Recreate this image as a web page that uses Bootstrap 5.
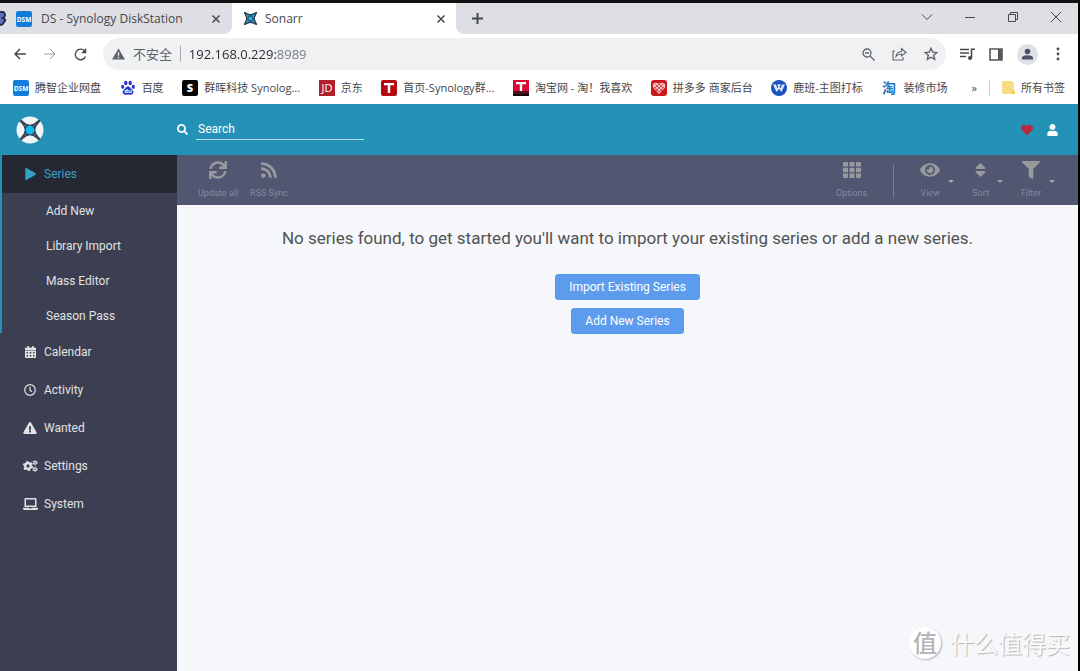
<!DOCTYPE html>
<html lang="zh-CN">
<head>
<meta charset="utf-8">
<meta name="viewport" content="width=device-width, initial-scale=1">
<title>Sonarr</title>
<link href="https://cdn.jsdelivr.net/npm/bootstrap@5.3.0/dist/css/bootstrap.min.css" rel="stylesheet">
<style>
:root{--teal:#2492b6;--side:#3b3f51;--tool:#515671}
body{font-family:Roboto,"Noto Sans CJK SC",sans-serif;font-size:12px;line-height:18px;color:#515253;background:#f5f7fa;border-top:3px solid #111;border-right:2px solid #000}
a{text-decoration:none;color:inherit}
button{border:0;padding:0;background:none;color:inherit;line-height:inherit;font-size:inherit}
svg{display:block;flex:none}
.fa-ic{fill:currentColor}
.line-ic{fill:none;stroke:currentColor}
.browser-ui{font-family:"Open Sans","Noto Sans CJK SC",sans-serif;color:#45484c;background:#fff}
.tab-strip{height:31px;background:#dddfe4}
.tab-idle{width:232px;border-bottom-right-radius:8px;overflow:hidden}
.tab-idle,.strip-rest{background:#dddfe4}
.strip-rest{border-bottom-left-radius:8px}
.tab-open{width:224px;background:#fff;border-radius:8px 8px 0 0;padding:0 11px 0 12px}
.tab-holder{background:#fff}
.win-keys{gap:31px;padding-right:16px}
.address-row{height:40px;padding:0 14px 0 14px}
.address-pill{height:32px;border-radius:16px;background:#eff1f3;padding:0 8px 0 9px;font-size:13px;color:#5f6368}
/* host name dark, port number lighter */
.address-pill input{border:0;outline:0;width:100%;min-width:0;padding:0;color:transparent;background:linear-gradient(90deg,#27292c 87px,#75797e 87px);-webkit-background-clip:text;background-clip:text}
.divider{width:1px;height:16px;background:#a4a7ab}
.bookmark-row{height:30px;font-size:11px;padding:0 13px 2px;white-space:nowrap}
.bookmark-row a{gap:6px}
.app-head{height:51px;background:var(--teal)}
.brand-cell{width:177px;padding-left:16px}
.find-box{width:168px;border:0;border-bottom:1px solid #b5dce8;border-radius:0;background:none;color:#fff;outline:0;padding:0 2px;height:20px}
.find-box::placeholder{color:#fff;opacity:1}
.side-menu{width:177px;background:var(--side);color:#e1e2e3;flex:none}
.side-menu .top-link{height:38px;padding-left:22px;gap:6px}
.side-menu .pic{width:16px;display:flex;justify-content:center}
.open-group{border-left:2px solid var(--teal)}
.open-group .top-link{background:#252833;color:#35a0c2;padding-left:20px}
.sub-link{height:35px;padding-left:44px}
.tool-row{height:50px;background:var(--tool);color:#989aa4;padding:5px 23px 0 21px;font-size:9px;line-height:12px}
.tool-row button{color:#8689a0}
.tool-row .fa-ic{color:#989a9e}
.tool-row .glyph{height:20px;display:flex;align-items:center;justify-content:center;margin-bottom:7px}
.tool-line{width:1px;height:34px;background:#777b8d;margin:4px 26px 0}
.caret{border:3px solid transparent;border-top-color:#a5a7ae;border-bottom:0;margin-top:20px}
.message{font-size:17px;line-height:24px;padding-top:21px;margin-bottom:24px}
.btn-sonarr{--bs-btn-color:#fff;--bs-btn-bg:#5d9cec;--bs-btn-border-color:#5899eb;--bs-btn-padding-x:13px;--bs-btn-padding-y:3px;--bs-btn-font-size:12px;--bs-btn-line-height:18px;--bs-btn-border-radius:3px;--bs-btn-font-weight:400}
.stamp{right:10px;bottom:11px;font-family:"Noto Sans CJK SC",sans-serif;font-size:24px;line-height:34px;color:#fbfbfc;text-shadow:1px 1px 1px #b4b4b6;gap:9px}
.stamp-disc{width:32px;height:32px;border-radius:50%;background:#fff;box-shadow:1px 1px 2px #b4b4b6;color:#b5b5b7;text-shadow:none;line-height:30px;text-align:center;font-weight:500}
</style>
</head>
<body class="d-flex flex-column min-vh-100">

<header class="browser-ui">
  <div class="tab-strip d-flex">
    <div class="tab-holder d-flex flex-grow-1">
      <div class="tab-idle d-flex align-items-center pe-2">
        <svg width="7" height="16" viewBox="0 0 7 16"><path d="M0 1Q5 0 5 4Q5 6 3 7Q7 9 4 11Q3 14 0 14" fill="#6570bd" stroke="#262b50" stroke-width="2"/></svg>
        <svg class="mx-2" width="18" height="16" viewBox="0 0 16 16"><rect width="16" height="16" rx="2" fill="#137ddb"/><text x="8" y="10.500" font-size="6.500" font-weight="700" text-anchor="middle" fill="#fff">DSM</text></svg>
        <span class="flex-grow-1 text-nowrap">DS - Synology DiskStation</span>
        <button aria-label="关闭"><svg class="line-ic me-1" width="8" height="8" viewBox="0 0 8 8" stroke-width="1.500"><path d="M0.500 0.500l7 7M7.500 0.500l-7 7"/></svg></button>
      </div>
      <div class="tab-open d-flex align-items-center">
        <svg class="me-2" width="13" height="13" viewBox="0 0 26 26"><path d="M1 1L8 4Q13 7 18 4L25 1L22 8Q19 13 22 18L25 25L18 22Q13 19 8 22L1 25L4 18Q7 13 4 8Z" fill="#2b9cc9" stroke="#26384c" stroke-width="2.500"/><circle cx="13" cy="13" r="5" fill="#25b9ec" stroke="#26384c" stroke-width="2"/></svg>
        <span class="flex-grow-1">Sonarr</span>
        <button aria-label="关闭"><svg class="line-ic" width="8" height="8" viewBox="0 0 8 8" stroke-width="1.500"><path d="M0.500 0.500l7 7M7.500 0.500l-7 7"/></svg></button>
      </div>
      <div class="strip-rest d-flex flex-grow-1 align-items-center ps-3">
        <button aria-label="新标签页" class="me-auto"><svg class="line-ic" width="11" height="11" viewBox="0 0 11 11" stroke-width="2"><path d="M5.500 0v11M0 5.500h11"/></svg></button>
        <div class="win-keys d-flex align-items-center pb-1">
          <button aria-label="搜索标签页"><svg class="line-ic" width="12" height="10" viewBox="0 0 12 10"><path d="M1 2.500l5 5 5-5"/></svg></button>
          <button aria-label="最小化"><svg class="line-ic" width="12" height="10" viewBox="0 0 12 10"><path d="M1 5.500h10"/></svg></button>
          <button aria-label="还原"><svg class="line-ic" width="12" height="12" viewBox="0 0 12 12"><path d="M1.500 3.500h7v7h-7zM3.500 3.500v-2h7v7h-2"/></svg></button>
          <button aria-label="关闭窗口"><svg class="line-ic" width="12" height="12" viewBox="0 0 12 12"><path d="M1 1l10 10M11 1L1 11"/></svg></button>
        </div>
      </div>
    </div>
  </div>

  <div class="address-row d-flex align-items-center">
    <div class="d-flex align-items-center me-3" style="gap:18px">
      <button aria-label="后退"><svg class="line-ic" width="12" height="12" viewBox="0 0 12 12" stroke-width="1.500"><path d="M12 6H1M6 1L1 6l5 5"/></svg></button>
      <button aria-label="前进" class="text-black-50"><svg class="line-ic opacity-75" width="12" height="12" viewBox="0 0 12 12"><path d="M0 6h11M6 1l5 5-5 5"/></svg></button>
      <button aria-label="重新加载"><svg class="line-ic" width="13" height="13" viewBox="0 0 13 13" stroke-width="1.400"><path d="M11.500 8.500A5.300 5.300 0 1 1 10.500 2.800L12 4.500"/><path d="M12.200 0v5.200H7z" fill="currentColor" stroke="none"/></svg></button>
    </div>
    <div class="address-pill d-flex align-items-center flex-grow-1">
      <svg class="me-2" width="13" height="12" viewBox="0 0 13 12"><path d="M6.500 0.500L13 11.500H0z" fill="#5f6368"/><path d="M6.500 4.200v3.600M6.500 8.800v1.400" stroke="#eff1f3" stroke-width="1.300"/></svg>
      <label for="addr" class="text-nowrap">不安全</label>
      <span class="divider ms-2 me-2"></span>
      <input class="flex-grow-1" id="addr" type="text" value="192.168.0.229:8989">
      <div class="d-flex align-items-center" style="gap:17px">
        <button aria-label="缩放"><svg class="line-ic" width="13" height="13" viewBox="0 0 13 13" stroke-width="1.300"><circle cx="5" cy="5" r="4"/><path d="M8 8l4.500 4.500M3 5h4"/></svg></button>
        <button aria-label="分享"><svg class="line-ic" width="15" height="14" viewBox="0 0 15 14" stroke-width="1.100"><path d="M3 4H1v9h10v-3M4 9.500Q4.500 5 9.500 4.500V1.500L14 5.500 9.500 9V7Q6 7 4 9.500z"/></svg></button>
        <button aria-label="收藏"><svg class="line-ic" width="14" height="14" viewBox="0 0 14 14" stroke-width="1.400"><path d="M7 1.300l1.700 3.800 4.200.400-3.200 2.800 1 4.100L7 10.200l-3.700 2.200 1-4.100L1.100 5.500l4.200-.400z"/></svg></button>
      </div>
    </div>
    <div class="d-flex align-items-center" style="gap:14px;margin-left:14px">
      <button aria-label="媒体控制"><svg class="line-ic" width="15" height="13" viewBox="0 0 15 13" stroke-width="1.600"><path d="M0 1.500h9M0 5h9M0 8.500h6M11.500 10V1.300H15"/><circle cx="10" cy="10" r="2" fill="currentColor" stroke="none"/></svg></button>
      <button aria-label="侧边栏"><svg width="14" height="13" viewBox="0 0 14 13"><path d="M1 1h12v11H1z" fill="none" stroke="#54575b" stroke-width="1.600"/><path d="M9 1h4v11H9z" fill="#54575b"/></svg></button>
      <button aria-label="用户"><svg width="21" height="21" viewBox="0 0 21 21"><circle cx="10.500" cy="10.500" r="10.500" fill="#dfe1e6"/><circle cx="10.500" cy="7.500" r="2.800" fill="#4b5365"/><path d="M5 15.500v-1.500q0-2.800 5.500-2.800t5.500 2.800v1.500z" fill="#4b5365"/></svg></button>
      <button aria-label="菜单" class="px-1"><svg class="fa-ic" width="4" height="14" viewBox="0 0 4 14"><circle cx="2" cy="2" r="1.400"/><circle cx="2" cy="7" r="1.400"/><circle cx="2" cy="12" r="1.400"/></svg></button>
    </div>
  </div>

  <nav class="bookmark-row d-flex align-items-center">
    <div class="d-flex flex-grow-1 justify-content-between">
      <a href="#" class="d-flex align-items-center"><svg width="16" height="16" viewBox="0 0 16 16"><rect width="16" height="16" rx="2" fill="#137ddb"/><text x="8" y="10.500" font-size="6.500" font-weight="700" text-anchor="middle" fill="#fff">DSM</text></svg>腾智企业网盘</a>
      <a href="#" class="d-flex align-items-center"><svg width="16" height="16" viewBox="0 0 16 16" fill="#2a35c5"><ellipse cx="5.800" cy="3" rx="1.700" ry="2.300"/><ellipse cx="10.200" cy="3" rx="1.700" ry="2.300"/><ellipse cx="2.700" cy="6.800" rx="1.600" ry="2.100"/><ellipse cx="13.300" cy="6.800" rx="1.600" ry="2.100"/><path d="M8 6.300Q10 6.500 11 8.700Q14.500 11 13 13.500Q12 15.500 8 14.500Q4 15.500 3 13.500Q1.500 11 5 8.700Q6 6.500 8 6.300z"/><text x="8" y="13.200" font-size="6" font-weight="700" fill="#fff" text-anchor="middle">du</text></svg>百度</a>
      <a href="#" class="d-flex align-items-center"><svg width="16" height="16" viewBox="0 0 16 16"><rect width="16" height="16" rx="2" fill="#050505"/><text x="8" y="12" font-size="11" font-weight="800" text-anchor="middle" fill="#fff">S</text></svg>群晖科技 Synolog...</a>
      <a href="#" class="d-flex align-items-center"><svg width="16" height="16" viewBox="0 0 16 16"><rect width="16" height="16" fill="#b3202c"/><text x="8" y="12" font-size="11" text-anchor="middle" fill="#fff">JD</text></svg>京东</a>
      <a href="#" class="d-flex align-items-center"><svg width="16" height="16" viewBox="0 0 16 16"><rect width="16" height="16" rx="2" fill="#b50b12"/><path d="M3 3h10v2.300H9.200V13H6.800V5.300H3z" fill="#fff"/></svg>首页-Synology群...</a>
      <a href="#" class="d-flex align-items-center"><svg width="16" height="16" viewBox="0 0 16 16"><rect width="16" height="16" fill="#d90b35"/><path d="M0 11h16v5H0z" fill="#52101b"/><path d="M0 14h16v2H0z" fill="#16090c"/><path d="M3 2h10v2.200H9.200V11H6.800V4.200H3z" fill="#fff"/></svg>淘宝网 - 淘！我喜欢</a>
      <a href="#" class="d-flex align-items-center"><svg width="16" height="16" viewBox="0 0 16 16"><rect width="16" height="16" rx="3" fill="#cc161d"/><path d="M8 14L2 7.500Q1 3 4.500 2.700Q7 2.700 8 4Q9 2.700 11.500 2.700Q15 3 14 7.500z" fill="#f3c7c7"/><path d="M4 4l7 7M12 4l-7 7M3 7l5 5M13 7l-5 5M8 4l4 4M8 4L4 8" stroke="#cc161d" stroke-width=".7"/></svg>拼多多 商家后台</a>
      <a href="#" class="d-flex align-items-center"><svg width="16" height="16" viewBox="0 0 16 16"><circle cx="8" cy="8" r="8" fill="#1b50bf"/><path d="M2 4.500h3l1.500 4L8 5.500l1.500 3 1.500-4h3L10.500 12 8 9 5.500 12z" fill="#dce8fb"/><path d="M6 4.500h4L8 7z" fill="#fff"/></svg>鹿班-主图打标</a>
      <a href="#" class="d-flex align-items-center"><svg class="overflow-visible" width="16" height="16" viewBox="0 0 16 16"><text x="8" y="13" font-size="14" font-weight="700" text-anchor="middle" fill="#2877c3">淘</text></svg>装修市场</a>
    </div>
    <button class="ms-4 me-2 pe-1" aria-label="更多书签">»</button>
    <span class="divider opacity-50 me-2"></span>
    <a href="#" class="d-flex align-items-center ps-1"><svg width="13" height="14" viewBox="0 0 13 14"><path d="M1 0h9l2 2v7l1 1v3H1q-1 0-1-1V1q0-1 1-1z" fill="#f8dc83"/><path d="M9 13V10h4v3z" fill="#f2cd5b"/></svg>所有书签</a>
  </nav>
</header>

<div class="app-head d-flex align-items-center text-white">
  <a href="#" class="brand-cell" aria-label="Sonarr"><svg width="28" height="28" viewBox="0 0 28 28"><circle cx="14" cy="14" r="13.500" fill="#eef4f7"/><path d="M5 4L10 8Q14 10.500 18 8L23 4L24 5L20 10Q17.500 14 20 18L24 23L23 24L18 20Q14 17.500 10 20L5 24L4 23L8 18Q10.500 14 8 10L4 5Z" fill="#3a4354" stroke="#3a4354"/><path d="M8.500 8.500l2 2M19.500 8.500l-2 2M8.500 19.500l2-2M19.500 19.500l-2-2" stroke="#2b87a6"/><circle cx="14" cy="14" r="4.300" fill="#0cbcf5"/></svg></a>
  <label for="find" class="me-2"><svg class="fa-ic" width="11" height="11" viewBox="0 0 512 512"><path d="M505 442.700L405.300 343c-4.500-4.500-10.600-7-17-7H372c27.600-35.300 44-79.700 44-128C416 93.100 322.900 0 208 0S0 93.100 0 208s93.100 208 208 208c48.300 0 92.700-16.400 128-44v16.300c0 6.400 2.500 12.500 7 17l99.700 99.700c9.400 9.400 24.600 9.400 33.900 0l28.300-28.300c9.400-9.400 9.400-24.600.1-34zM208 336c-70.700 0-128-57.200-128-128 0-70.700 57.200-128 128-128 70.700 0 128 57.200 128 128 0 70.700-57.200 128-128 128z"/></svg></label>
  <input id="find" class="find-box" type="text" placeholder="Search">
  <div class="d-flex align-items-center ms-auto me-3 pe-1" style="gap:14px">
    <a href="#" aria-label="Donate"><svg width="12" height="12" viewBox="0 0 512 512" fill="#b8293d"><path d="M462.300 62.600C407.500 15.900 326 24.300 275.700 76.200L256 96.500l-19.700-20.300C186.100 24.300 104.500 15.900 49.700 62.600c-62.800 53.600-66.100 149.800-9.900 207.900l193.500 199.800c12.500 12.900 32.800 12.900 45.300 0l193.500-199.800c56.300-58.100 53-154.300-9.800-207.900z"/></svg></a>
    <button aria-label="Account"><svg class="fa-ic" width="11" height="12" viewBox="0 0 448 512"><path d="M224 256c70.700 0 128-57.300 128-128S294.700 0 224 0 96 57.300 96 128s57.300 128 128 128zm89.600 32h-16.700c-22.200 10.200-46.900 16-72.900 16s-50.600-5.800-72.900-16h-16.700C60.200 288 0 348.200 0 422.400V464c0 26.500 21.500 48 48 48h352c26.500 0 48-21.500 48-48v-41.600c0-74.200-60.200-134.400-134.400-134.400z"/></svg></button>
  </div>
</div>

<div class="d-flex flex-grow-1">
  <nav class="side-menu">
    <div class="open-group">
      <a href="#" class="top-link d-flex align-items-center"><span class="pic"><svg class="fa-ic" width="11" height="12" viewBox="0 0 448 512"><path d="M424.400 214.700L72.400 6.600C43.800-10.300 0 6.100 0 47.900V464c0 37.500 40.700 60.100 72.400 41.300l352-208c31.400-18.500 31.500-64.100 0-82.600z"/></svg></span>Series</a>
      <a href="#" class="sub-link d-flex align-items-center">Add New</a>
      <a href="#" class="sub-link d-flex align-items-center">Library Import</a>
      <a href="#" class="sub-link d-flex align-items-center">Mass Editor</a>
      <a href="#" class="sub-link d-flex align-items-center">Season Pass</a>
    </div>
    <a href="#" class="top-link d-flex align-items-center"><span class="pic"><svg class="fa-ic" width="11" height="12" viewBox="0 0 11 12"><path fill-rule="evenodd" d="M2.500 0H4v1.500h3V0h1.500v1.500H10q1 0 1 1V4H0V2.500q0-1 1-1h1.500zM0 4.600h11V11q0 1-1 1H1q-1 0-1-1zM1.500 6v1.400H3V6zm3.200 0v1.400h1.600V6zM8 6v1.400h1.500V6zM1.500 9v1.400H3V9zm3.200 0v1.400h1.600V9zM8 9v1.400h1.500V9z"/></svg></span>Calendar</a>
    <a href="#" class="top-link d-flex align-items-center"><span class="pic"><svg class="line-ic" width="12" height="12" viewBox="0 0 12 12" stroke-width="1.200"><circle cx="6" cy="6" r="5.300"/><path d="M6 2.800V6.300l2 1.500"/></svg></span>Activity</a>
    <a href="#" class="top-link d-flex align-items-center"><span class="pic"><svg class="fa-ic" width="14" height="12" viewBox="0 0 576 512"><path d="M569.517 440.013C587.975 472.007 564.806 512 527.940 512H48.054c-36.937 0-59.999-40.055-41.577-71.987L246.423 23.985c18.467-32.009 64.720-31.951 83.154 0l239.940 416.028zM288 354c-25.405 0-46 20.595-46 46s20.595 46 46 46 46-20.595 46-46-20.595-46-46-46zm-43.673-165.346l7.418 136c.347 6.364 5.609 11.346 11.982 11.346h48.546c6.373 0 11.635-4.982 11.982-11.346l7.418-136c.375-6.874-5.098-12.654-11.982-12.654h-63.383c-6.884 0-12.356 5.780-11.981 12.654z"/></svg></span>Wanted</a>
    <a href="#" class="top-link d-flex align-items-center"><span class="pic"><svg class="line-ic" width="15" height="12" viewBox="0 0 15 12"><circle cx="5" cy="6" r="2.800" stroke-width="2.300"/><circle cx="5" cy="6" r="4.300" stroke-width="1.600" stroke-dasharray="2.252 2.252"/><circle cx="12" cy="2.700" r="1.400" stroke-width="1.200"/><circle cx="12" cy="2.700" r="2.300" stroke-width=".8" stroke-dasharray="1.200 1.200"/><circle cx="12" cy="9.300" r="1.400" stroke-width="1.200"/><circle cx="12" cy="9.300" r="2.300" stroke-width=".8" stroke-dasharray="1.200 1.200"/></svg></span>Settings</a>
    <a href="#" class="top-link d-flex align-items-center"><span class="pic"><svg class="fa-ic" width="15" height="12" viewBox="0 0 640 512"><path d="M624 416H381.540c-.740 19.810-14.710 32-32.740 32H288c-18.690 0-33.020-17.470-32.770-32H16c-8.800 0-16 7.200-16 16v16c0 35.200 28.800 64 64 64h512c35.200 0 64-28.800 64-64v-16c0-8.800-7.200-16-16-16zM576 48c0-26.400-21.600-48-48-48H112C85.600 0 64 21.600 64 48v336h512V48zm-64 272H128V64h384v256z"/></svg></span>System</a>
  </nav>

  <main class="flex-grow-1">
    <div class="tool-row d-flex">
      <div class="d-flex align-items-start" style="gap:12px">
        <button><span class="glyph"><svg class="fa-ic" width="18" height="18" viewBox="0 0 512 512"><path d="M440.650 12.570l4 82.770A247.160 247.160 0 0 0 255.830 8C134.730 8 33.910 94.920 12.290 209.820A12 12 0 0 0 24.090 224h49.050a12 12 0 0 0 11.670-9.260 175.910 175.910 0 0 1 317-56.940l-101.460-4.860a12 12 0 0 0-12.570 12v47.410a12 12 0 0 0 12 12H500a12 12 0 0 0 12-12V12a12 12 0 0 0-12-12h-47.370a12 12 0 0 0-11.980 12.570zM255.830 432a175.610 175.610 0 0 1-146-77.800l101.800 4.870a12 12 0 0 0 12.570-12v-47.400a12 12 0 0 0-12-12H12a12 12 0 0 0-12 12V500a12 12 0 0 0 12 12h47.350a12 12 0 0 0 12-12.600l-4.150-82.570A247.170 247.170 0 0 0 255.830 504c121.110 0 221.930-86.920 243.550-201.820a12 12 0 0 0-11.800-14.180h-49.050a12 12 0 0 0-11.670 9.260A175.860 175.860 0 0 1 255.830 432z"/></svg></span>Update all</button>
        <button><span class="glyph"><svg class="fa-ic" width="16" height="18" viewBox="0 0 448 512"><path d="M128.081 415.959c0 35.369-28.672 64.041-64.041 64.041S0 451.328 0 415.959s28.672-64.041 64.041-64.041 64.040 28.673 64.040 64.041zm175.660 47.250c-8.354-154.600-132.185-278.587-286.950-286.950C7.656 175.765 0 183.105 0 192.253v48.069c0 8.415 6.490 15.472 14.887 16.018 111.832 7.284 201.473 96.702 208.772 208.772.547 8.397 7.604 14.887 16.018 14.887h48.069c9.149.001 16.489-7.655 15.995-16.790zm144.249.288C439.596 229.677 251.465 40.445 16.503 32.010 7.473 31.686 0 38.981 0 48.016v48.068c0 8.625 6.835 15.645 15.453 15.999 191.179 7.839 344.627 161.316 352.465 352.465.353 8.618 7.373 15.453 15.999 15.453h48.068c9.034-.001 16.329-7.474 16.005-16.504z"/></svg></span>RSS Sync</button>
      </div>
      <div class="d-flex align-items-start ms-auto">
        <button><span class="glyph"><svg class="fa-ic" width="18" height="16" viewBox="0 0 18 16"><path d="M0 1q0-1 1-1h4v4.500H0zM6.500 0h5v4.500h-5zM13 0h4q1 0 1 1v3.500h-5zM0 5.800h5v4.400H0zM6.500 5.800h5v4.400h-5zM13 5.800h5v4.400h-5zM0 11.500h5V16H1q-1 0-1-1zM6.500 11.500h5V16h-5zM13 11.500h5V15q0 1-1 1h-4z"/></svg></span>Options</button>
        <span class="tool-line"></span>
        <div class="d-flex" style="gap:18px">
          <button class="d-flex align-items-start"><span><span class="glyph"><svg class="fa-ic" width="20" height="18" viewBox="0 0 576 512"><path d="M572.520 241.400C518.290 135.590 410.930 64 288 64S57.680 135.640 3.480 241.410a32.350 32.350 0 0 0 0 29.190C57.710 376.410 165.070 448 288 448s230.320-71.640 284.520-177.410a32.350 32.350 0 0 0 0-29.190zM288 400a144 144 0 1 1 144-144 143.930 143.930 0 0 1-144 144zm0-240a95.310 95.310 0 0 0-25.310 3.790 47.850 47.850 0 0 1-66.900 66.900A95.780 95.780 0 1 0 288 160z"/></svg></span>View</span><span class="caret ms-2"></span></button>
          <button class="d-flex align-items-start"><span><span class="glyph"><svg class="fa-ic" width="11" height="18" viewBox="0 0 320 512"><path d="M41 288h238c21.400 0 32.100 25.900 17 41L177 448c-9.400 9.400-24.600 9.400-33.900 0L24 329c-15.100-15.100-4.400-41 17-41zm255-105L177 64c-9.400-9.400-24.600-9.400-33.900 0L24 183c-15.100 15.100-4.400 41 17 41h238c21.400 0 32.100-25.900 17-41z"/></svg></span>Sort</span><span class="caret ms-2"></span></button>
          <button class="d-flex align-items-start"><span><span class="glyph"><svg class="fa-ic" width="18" height="18" viewBox="0 0 512 512"><path d="M487.976 0H24.028C2.710 0-8.047 25.866 7.058 40.971L192 225.941V432c0 7.831 3.821 15.170 10.237 19.662l80 55.980C298.020 518.690 320 507.493 320 487.980V225.941l184.947-184.970C520.021 25.896 509.338 0 487.976 0z"/></svg></span>Filter</span><span class="caret ms-2"></span></button>
        </div>
      </div>
    </div>
    <div class="text-center">
      <p class="message">No series found, to get started you'll want to import your existing series or add a new series.</p>
      <div class="d-flex flex-column align-items-center gap-2">
        <button class="btn btn-sonarr">Import Existing Series</button>
        <button class="btn btn-sonarr">Add New Series</button>
      </div>
    </div>
  </main>
</div>

<div class="stamp position-absolute d-flex align-items-center"><span class="stamp-disc">值</span>什么值得买</div>

<script src="https://cdn.jsdelivr.net/npm/bootstrap@5.3.0/dist/js/bootstrap.bundle.min.js"></script>
</body>
</html>
